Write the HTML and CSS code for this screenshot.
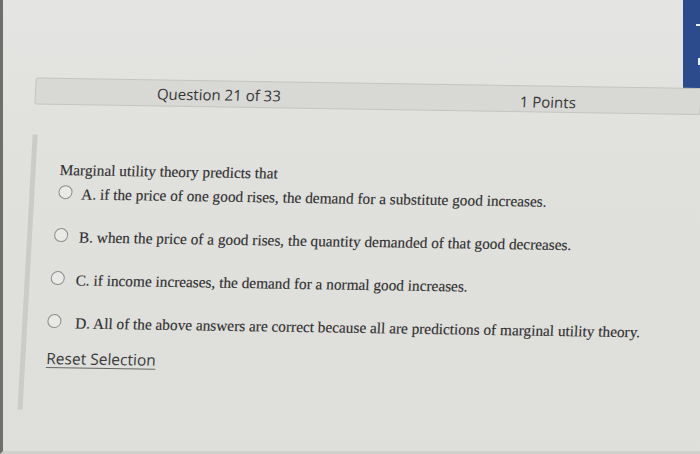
FILE: index.html
```html
<!DOCTYPE html>
<html>
<head>
<meta charset="utf-8">
<link rel="stylesheet" href="styles.css">
</head>
<body>
<div class="screen">
  <div class="tab"><span class="tab-mark tab-mark-1"></span><span class="tab-mark tab-mark-2"></span></div>
  <div class="sheet">
    <div class="qbar">
      <span class="qnum">Question 21 of 33</span>
      <span class="pts">1 Points</span>
    </div>
    <div class="panel">
      <p class="stem">Marginal utility theory predicts that</p>
      <ul class="options">
        <li class="opt opt-a"><span class="radio"></span><span class="label">A. if the price of one good rises, the demand for a substitute good increases.</span></li>
        <li class="opt opt-b"><span class="radio"></span><span class="label">B. when the price of a good rises, the quantity demanded of that good decreases.</span></li>
        <li class="opt opt-c"><span class="radio"></span><span class="label">C. if income increases, the demand for a normal good increases.</span></li>
        <li class="opt opt-d"><span class="radio"></span><span class="label">D. All of the above answers are correct because all are predictions of marginal utility theory.</span></li>
      </ul>
      <a class="reset" href="#">Reset Selection</a>
    </div>
  </div>
</div>
</body>
</html>
```
FILE: styles.css
```css
html, body {
  margin: 0;
  padding: 0;
  background: #dfdfdc;
}
.screen {
  position: relative;
  width: 697px;
  height: 451px;
  overflow: hidden;
  border-left: 3px solid #6e6e6b;
  border-bottom: 3px solid #cfcfcc;
  background: linear-gradient(180deg, #e4e4e2 0%, #e0e0dd 40%, #dededb 100%);
}
.tab {
  position: absolute;
  top: 0;
  right: 0;
  width: 17px;
  height: 104px;
  background: #2b4b8c;
  border-bottom-left-radius: 12px;
}
.tab-mark {
  position: absolute;
  right: 0;
  background: #e8ecf4;
}
.tab-mark-1 { top: 24px; width: 4px; height: 2px; }
.tab-mark-2 { top: 58px; width: 2px; height: 7px; }
.sheet {
  transform: matrix(1, 0.0157, -0.055, 1, 0, 0);
  transform-origin: 0 0;
  padding-top: 77px;
}
.qbar {
  display: flex;
  align-items: center;
  box-sizing: border-box;
  height: 27px;
  margin-left: 37px;
  margin-right: -6px;
  padding-left: 121px;
  background: #d8d8d5;
  border: 1px solid #c4c4c1;
  border-radius: 2px;
  font-family: "Open Sans", "Liberation Sans", sans-serif;
  font-size: 15px;
  color: #363636;
}
.qnum {
  width: 363px;
  padding-top: 1px;
}
.pts {
  padding-top: 5px;
}
.panel {
  margin-top: 30px;
  margin-left: 37px;
  height: 275px;
  border-left: 5px solid #cbcbc8;
  padding-left: 24px;
  padding-top: 26px;
  box-sizing: border-box;
  font-family: "Liberation Serif", "Times New Roman", serif;
  font-size: 15.3px;
  line-height: 18px;
  color: #2f2f2f;
  -webkit-text-stroke: 0.15px #2f2f2f;
}
.stem {
  margin: 0 0 6px 0;
}
.options {
  list-style: none;
  margin: 0;
  padding: 0;
  display: flex;
  flex-direction: column;
  gap: 25px;
}
.opt {
  display: flex;
  align-items: center;
  height: 18px;
}
.radio {
  box-sizing: border-box;
  width: 14px;
  height: 14px;
  border: 1.5px solid #8d8d8b;
  border-radius: 50%;
  background: #e9e9e7;
  margin-bottom: 4px;
  flex: none;
}
.opt-a .radio { margin-left: 0; margin-right: 9px; }
.opt-b .radio { margin-left: -2px; margin-right: 11px; }
.opt-c .radio { margin-left: -3px; margin-right: 11px; }
.opt-d .radio { margin-left: -4px; margin-right: 14px; }
.reset {
  display: inline-block;
  margin-top: 16px;
  margin-left: -3px;
  font-family: "Open Sans", "Liberation Sans", sans-serif;
  font-size: 15.5px;
  line-height: 20px;
  color: #3a3a3a;
  -webkit-text-stroke: 0;
  text-decoration: underline;
  text-decoration-color: #666;
  text-underline-offset: 3px;
}
```
